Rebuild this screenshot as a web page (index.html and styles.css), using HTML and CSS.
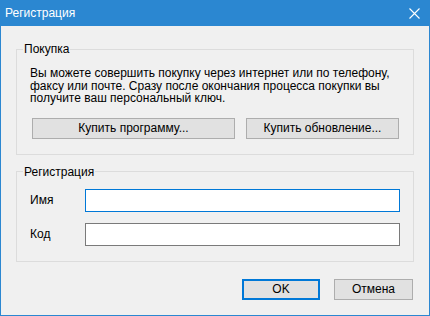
FILE: index.html
```html
<!DOCTYPE html>
<html lang="ru">
<head>
<meta charset="utf-8">
<title>Регистрация</title>
<link rel="stylesheet" href="styles.css">
</head>
<body>
<div class="window">
  <div class="titlebar">
    <span class="title">Регистрация</span>
    <span class="close">
      <svg width="11" height="11" viewBox="0 0 11 11"><path d="M0.5 0.5 L10.5 10.5 M10.5 0.5 L0.5 10.5" stroke="#fff" stroke-width="1.1" fill="none"/></svg>
    </span>
  </div>
  <div class="content">
    <fieldset class="group group-buy">
      <legend class="legend">Покупка</legend>
      <p class="info">Вы можете совершить покупку через интернет или по телефону,<br>факсу или почте. Сразу после окончания процесса покупки вы<br>получите ваш персональный ключ.</p>
      <div class="buy-buttons">
        <button class="btn btn-program">Купить программу...</button>
        <button class="btn btn-update">Купить обновление...</button>
      </div>
    </fieldset>
    <fieldset class="group group-reg">
      <legend class="legend">Регистрация</legend>
      <div class="field">
        <label class="label">Имя</label>
        <div class="input input-focus"></div>
      </div>
      <div class="field">
        <label class="label">Код</label>
        <div class="input"></div>
      </div>
    </fieldset>
    <div class="footer">
      <button class="btn btn-ok">OK</button>
      <button class="btn btn-cancel">Отмена</button>
    </div>
  </div>
</div>
</body>
</html>
```

FILE: styles.css
```css
* { box-sizing: border-box; }
html, body { margin: 0; padding: 0; }
body {
  width: 430px;
  height: 316px;
  overflow: hidden;
  font-family: "Liberation Sans", Arial, sans-serif;
  font-size: 12px;
  color: #000;
}
.window {
  width: 430px;
  height: 316px;
  background: #f0f0f0;
  border: 1px solid #2b87d1;
  border-top: none;
  display: flex;
  flex-direction: column;
}
.titlebar {
  height: 26px;
  margin: 0 -1px;
  background: #2b87d1;
  color: #fff;
  display: flex;
  align-items: center;
  justify-content: space-between;
  padding: 0 10px 0 5px;
}
.title { font-size: 12px; line-height: 14px; }
.close { display: flex; width: 11px; height: 11px; }
.content {
  padding: 16px 15px 0 15px;
  display: flex;
  flex-direction: column;
}
.group {
  margin: 0;
  border: 1px solid #dcdcdc;
  padding: 11px 13px 15px 13px;
  min-inline-size: 0;
}
.legend {
  line-height: 14px;
  padding: 0 1px;
  margin-left: -7px;
}
.info {
  margin: 0;
  line-height: 12.5px;
}
.buy-buttons {
  display: flex;
  gap: 11px;
  margin: 13px 0 0 2px;
}
.btn {
  font-family: inherit;
  font-size: 12px;
  color: #000;
  height: 21px;
  background: #e1e1e1;
  border: 1px solid #adadad;
  padding: 0;
  margin: 0;
}
.btn-program { width: 203px; }
.btn-update { width: 153px; }
.group-reg {
  margin-top: 10px;
  padding: 10px 13px 15px 13px;
  display: flex;
  flex-direction: column;
  gap: 11px;
}
.field {
  display: flex;
  align-items: center;
}
.label { width: 55px; }
.input {
  width: 315px;
  height: 23px;
  background: #fff;
  border: 1px solid #7a7a7a;
}
.input-focus { border-color: #0078d7; }
.footer {
  display: flex;
  justify-content: flex-end;
  gap: 14px;
  margin-top: 17px;
  padding-right: 1px;
}
.btn-ok { width: 78px; border: 2px solid #0078d7; }
.btn-cancel { width: 79px; }
```
